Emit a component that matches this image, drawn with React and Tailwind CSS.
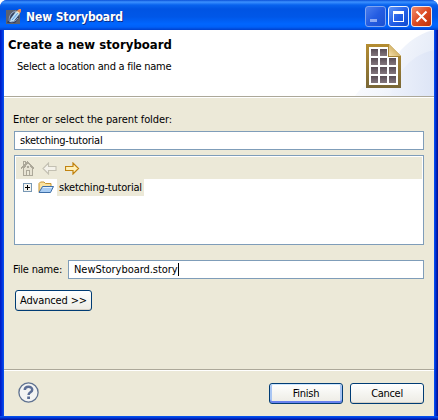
import React from "react";

function TitleIcon() {
  return (
    <svg width="16" height="16" viewBox="0 0 16 16" className="shrink-0">
      <rect x="0" y="1" width="14" height="14" fill="#5d626f" />
      <path d="M1 14 3 9 7 4h5l1 5-4 5z" fill="#34405f" />
      <path d="M3 12c0-6 3-9 7-10M3 12c3 2 7 0 9-3" fill="none" stroke="#8fa5cd" />
      <path d="M4.500 10 10 2.500 13.500 5 8 12 4 13z" fill="#b9dbf5" />
      <path d="M6 11 12 4" stroke="#5b9be0" />
      <path d="m11 2 2-2h2v3l-1 1z" fill="#e98a55" />
      <path d="m10 3 1-1 3 2-1 1z" fill="#f5edd0" />
    </svg>
  );
}

function WindowButton({ kind }) {
  const tone =
    kind === "close"
      ? "border-[#f4e5e5] bg-linear-to-br from-[#f08a68] via-[#dc4a22] to-[#bd3208]"
      : kind === "max"
        ? "border-[#e8effc] bg-linear-to-br from-[#5f93f5] via-[#2560e8] to-[#0d49d0]"
        : "border-[#7fa4f0] bg-linear-to-br from-[#4a7ded] via-[#245ce2] to-[#1c50d0]";
  return (
    <div className={`h-[21px] w-[21px] rounded-[3px] border ${tone}`}>
      <svg width="19" height="19" viewBox="0 0 19 19">
        {kind === "min" && <rect x="4" y="12" width="7" height="3" fill="#8fabf2" />}
        {kind === "max" && (
          <g fill="#fff">
            <rect x="4" y="4" width="11" height="3" />
            <rect x="4" y="4" width="1" height="11" />
            <rect x="14" y="4" width="1" height="11" />
            <rect x="4" y="14" width="11" height="1" />
          </g>
        )}
        {kind === "close" && <path d="M4.500 4.500l10 10M14.500 4.500l-10 10" stroke="#fff" strokeWidth="2.1" />}
      </svg>
    </div>
  );
}

const cells = [
  [0, 0], [1, 0],
  [0, 1], [1, 1], [2, 1],
  [0, 2], [1, 2], [2, 2],
  [0, 3], [1, 3], [2, 3],
];

function Banner() {
  return (
    <svg width="80" height="66" viewBox="0 0 80 66" className="shrink-0">
      <defs>
        <linearGradient id="swoosh" x1="0" y1="0" x2="1" y2="0.3">
          <stop offset="0" stopColor="#fdfdfe" />
          <stop offset="0.55" stopColor="#f3f6fc" />
          <stop offset="1" stopColor="#e6ecf8" />
        </linearGradient>
        <linearGradient id="inner" x1="0" y1="0" x2="1" y2="0">
          <stop offset="0" stopColor="#eef2fb" />
          <stop offset="1" stopColor="#dde5f6" />
        </linearGradient>
        <linearGradient id="frame" x1="0" y1="0" x2="0" y2="1">
          <stop offset="0" stopColor="#b58d31" />
          <stop offset="1" stopColor="#796736" />
        </linearGradient>
        <linearGradient id="fold" x1="0" y1="1" x2="1" y2="0">
          <stop offset="0" stopColor="#f5dfaa" />
          <stop offset="1" stopColor="#b58d31" />
        </linearGradient>
        <linearGradient id="cell" x1="0" y1="0" x2="0" y2="1">
          <stop offset="0" stopColor="#594d55" />
          <stop offset="1" stopColor="#83767c" />
        </linearGradient>
      </defs>
      <path d="M80 0C62 4 48 16 38 32 28 48 12 50 1 66H80z" fill="url(#swoosh)" />
      <path d="M80 20C58 24 43 42 36 66H80z" fill="url(#inner)" />
      <path d="M12 14h23l12 12v32H12z" fill="url(#frame)" />
      <path d="M15 17h19v10h10v28H15z" fill="#fff" />
      <path d="M35 14v12h12z" fill="url(#fold)" />
      {cells.map(([c, r]) => (
        <rect key={`${c}-${r}`} x={17 + c * 9} y={19 + r * 9} width="7" height="7" fill="url(#cell)" />
      ))}
    </svg>
  );
}

function HomeIcon() {
  return (
    <svg width="14" height="16" viewBox="0 0 14 16" shapeRendering="crispEdges">
      <path d="M2.500 8v7.500h9V8L7 3z" fill="#e7e3d3" stroke="#aca899" />
      <path d="M0 8.500 6.500 2l6.500 6.500M2.500 6V1.500h2V4" fill="none" stroke="#aca899" strokeWidth="1.3" />
      <rect x="5" y="10" width="4" height="6" fill="#aca899" />
      <rect x="6" y="11" width="2" height="4" fill="#ece9d8" />
      <rect x="6" y="6" width="2" height="2" fill="#aca899" />
    </svg>
  );
}

function ArrowIcon({ forward }) {
  return (
    <svg width="15" height="13" viewBox="0 0 15 13">
      {forward ? (
        <path d="M.5 4.500H8V1L13.500 6.500 8 12V8.500H.5z" fill="#fff0b8" stroke="#c28310" strokeWidth="1.2" />
      ) : (
        <path d="M14 4.500H6.500V1L1 6.500 6.500 12V8.500H14z" fill="#f4f2ea" stroke="#c3c0b2" strokeWidth="1.1" />
      )}
    </svg>
  );
}

function FolderIcon() {
  return (
    <svg width="16" height="13" viewBox="0 0 16 13">
      <path d="M1 11V2.500L2.500 1H6l1.500 1.500H13V6" fill="#fbe3a0" stroke="#c79532" />
      <path d="M1 11.500 4.500 5.500H15.500L12.500 11.500z" fill="#a9cdf3" stroke="#3d6ea8" />
      <path d="M5 6.500h9" stroke="#e0f0fd" />
    </svg>
  );
}

function HelpIcon() {
  return (
    <svg width="22" height="22" viewBox="0 0 22 22" className="shrink-0">
      <circle cx="10.500" cy="10.500" r="9.600" fill="#f3f4f3" stroke="#5f7290" strokeWidth="1.300" />
      <path d="M6.800 8C6.800 3.800 14.200 3.800 14.200 7.700 14.200 10.500 10.600 10.100 10.600 13" fill="none" stroke="#5b6e96" strokeWidth="2.500" />
      <rect x="9.200" y="14.500" width="2.800" height="2.500" fill="#5b6e96" />
    </svg>
  );
}

function Button({ children, focus, className }) {
  return (
    <div
      className={`flex h-[21px] items-center justify-center rounded-[3px] border border-[#003c74] bg-linear-to-b from-white via-[#f5f5f1] to-[#edebe4] ${
        focus ? "shadow-[inset_0_1px_0_#cee7ff,inset_0_-2px_0_#6982ee,inset_2px_0_0_#a8c5f3,inset_-2px_0_0_#a8c5f3]" : "shadow-[inset_0_-1px_0_#d6d0c5]"
      } ${className}`}
    >
      {children}
    </div>
  );
}

export default function App() {
  return (
    <div className="h-[420px] w-[438px] overflow-hidden bg-white font-['DejaVu_Sans_Condensed','DejaVu_Sans',sans-serif] text-[11px] leading-[14px] text-black [font-stretch:condensed]">
      <div className="flex h-full flex-col rounded-t-[7px] bg-[linear-gradient(to_right,#0018c0_0,#0030dc_2px,#0855f0_4px,#0855f0_434px,#0040e8_435px,#0018a8_437px,#001390_438px)]">
        <div className="flex h-[30px] shrink-0 items-center rounded-t-[7px] bg-[linear-gradient(to_bottom,#0a50d8_0,#3c91ff_2px,#0863ee_5px,#0054e3_9px,#0057e8_17px,#0066ff_24px,#0060f8_27px,#0040cc_30px)] pt-[3px] pr-[6px] pl-[6px]">
          <TitleIcon />
          <span className="ml-[4px] text-[12px] font-bold tracking-[-0.1px] whitespace-nowrap text-white [text-shadow:1px_1px_0_#0b2f8a]">
            New Storyboard
          </span>
          <div className="ml-auto flex gap-[2px]">
            <WindowButton kind="min" />
            <WindowButton kind="max" />
            <WindowButton kind="close" />
          </div>
        </div>
        <div className="mx-[4px] flex h-[386px] shrink-0 flex-col bg-[#ece9d8]">
          <div className="flex h-[66px] shrink-0 justify-between bg-white">
            <div className="pt-[7px] pl-[4px]">
              <div className="text-[13px] leading-[15px] font-bold tracking-[0.03px] whitespace-nowrap">Create a new storyboard</div>
              <div className="mt-[8px] pl-[9px] tracking-[-0.25px] whitespace-nowrap">Select a location and a file name</div>
            </div>
            <Banner />
          </div>
          <div className="h-[2px] shrink-0 border-t border-[#aca899] bg-white" />
          <div className="flex h-[271px] shrink-0 flex-col pt-[15px] pr-[10px] pl-[10px]">
            <div className="-ml-px tracking-[-0.1px] whitespace-nowrap">Enter or select the parent folder:</div>
            <div className="mt-[4px] flex h-[19px] shrink-0 items-center border border-[#7f9db9] bg-white pl-[5px] tracking-[-0.24px]">
              sketching-tutorial
            </div>
            <div className="mt-[5px] h-[90px] shrink-0 border border-[#7f9db9] bg-white p-px">
              <div className="flex h-[22px] items-center bg-[#ece9d8] pl-[5px]">
                <HomeIcon />
                <span className="ml-[7px]"><ArrowIcon /></span>
                <span className="ml-[8px]"><ArrowIcon forward /></span>
              </div>
              <div className="flex h-[17px] items-center pl-[7px]">
                <svg width="9" height="9" viewBox="0 0 9 9" shapeRendering="crispEdges">
                  <rect x=".5" y=".5" width="8" height="8" fill="#f5f4ef" stroke="#7898b5" />
                  <path d="M2 4.500h5M4.500 2v5" stroke="#000" />
                </svg>
                <span className="ml-[6px]"><FolderIcon /></span>
                <span className="ml-[3px] flex h-[17px] items-center bg-[#ece9d8] px-[2px] tracking-[-0.22px]">sketching-tutorial</span>
              </div>
            </div>
            <div className="mt-[15px] flex h-[19px] shrink-0 items-center">
              <span className="-ml-px w-[55px] shrink-0 tracking-[-0.2px] whitespace-nowrap">File name:</span>
              <div className="flex h-[19px] flex-1 items-center border border-[#7f9db9] bg-white pl-[5px]">
                <span className="tracking-[-0.04px]">NewStoryboard.story</span>
                <span className="h-[13px] w-px bg-black" />
              </div>
            </div>
            <Button className="mt-[11px] ml-px w-[77px]"><span className="tracking-[-0.15px]">Advanced &gt;&gt;</span></Button>
          </div>
          <div className="h-[2px] shrink-0 border-t border-[#aca899] bg-white" />
          <div className="flex flex-1 items-start pt-[12px] pr-[10px] pl-[14px]">
            <div className="-mt-px"><HelpIcon /></div>
            <Button focus className="ml-auto w-[74px] tracking-[-0.25px]">Finish</Button>
            <Button className="ml-[7px] w-[74px] tracking-[-0.3px]">Cancel</Button>
          </div>
        </div>
        <div className="h-[4px] shrink-0 bg-[linear-gradient(to_bottom,#0855f0_0,#0048e8_1px,#0020b8_3px,#001390_4px)]" />
      </div>
    </div>
  );
}
